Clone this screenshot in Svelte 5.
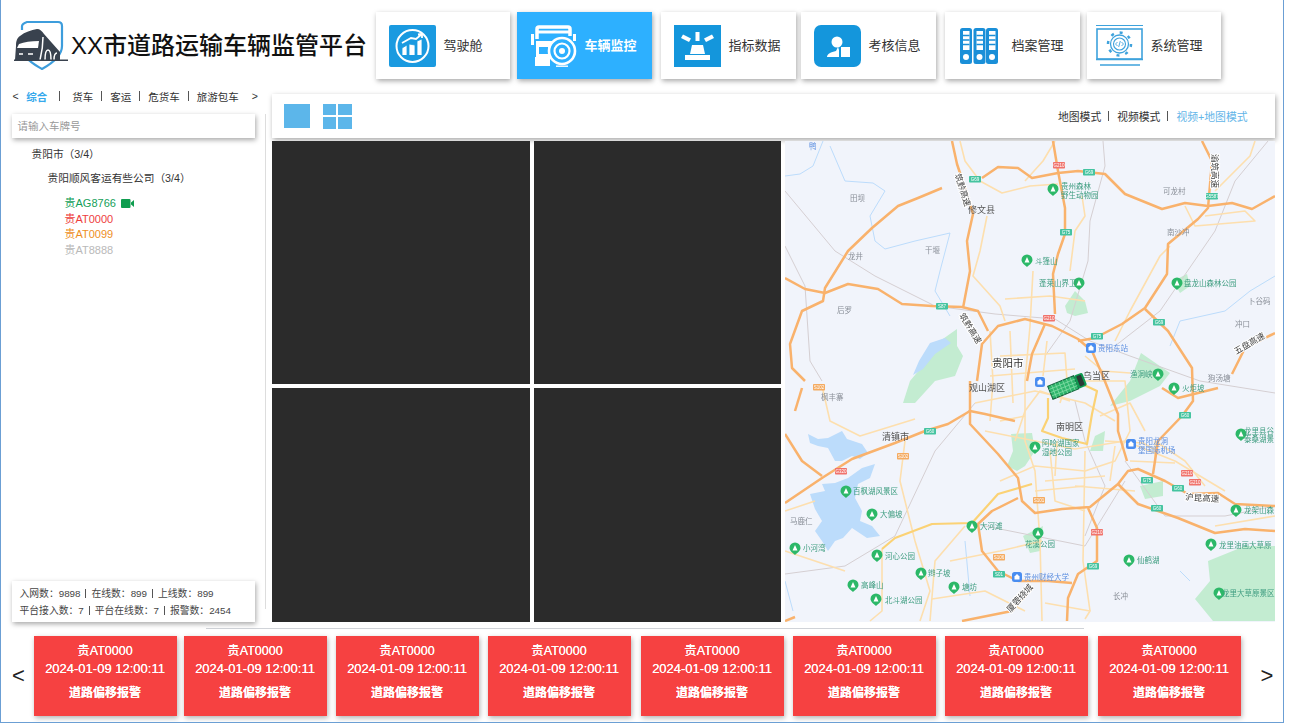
<script>
  const navItems = [
    { key: 'cockpit', label: '驾驶舱' },
    { key: 'monitor', label: '车辆监控', active: true },
    { key: 'metrics', label: '指标数据' },
    { key: 'review', label: '考核信息' },
    { key: 'archive', label: '档案管理' },
    { key: 'system', label: '系统管理' }
  ]
  const tabs = ['货车', '客运', '危货车', '旅游包车']
  const plates = [
    { no: '贵AG8766', cls: 'green', cam: true },
    { no: '贵AT0000', cls: 'red' },
    { no: '贵AT0099', cls: 'orange' },
    { no: '贵AT8888', cls: 'grey' }
  ]
  const alarms = Array(8).fill({ no: '贵AT0000', time: '2024-01-09 12:00:11', type: '道路偏移报警' })

  const highways = [
    '167,0 172,23 182,53 188,73 182,100 185,130 178,167',
    '157,47 133,57 113,65 87,87 63,110 40,147 38,160 17,170 5,203 7,227 20,240',
    '0,137 20,148 40,152 63,143 93,148 117,163 147,165 177,166 193,170 203,190',
    '192,240 197,203 213,185 240,178 267,185 293,198 307,210 317,233 333,273 333,290 342,320',
    '197,37 213,26 233,27 247,37 273,32 293,30 320,33 340,53 377,68 400,62 423,65 447,62 467,68 490,55',
    '417,0 427,20 423,67 413,78 383,103 382,133 360,167 337,183 310,197 293,200',
    '360,168 383,190 407,227 408,260 397,275 373,300 368,333',
    '268,0 273,30 280,67 280,93 273,113 268,133 270,173',
    '490,192 460,207 447,233',
    '260,183 247,213 242,240',
    '0,293 17,320 37,335',
    '0,362 37,337 67,318 110,302 140,290 163,283 185,270 200,273 230,280',
    '185,240 185,283 213,313 233,337 237,360 250,372 277,368 305,366 333,343 343,330 353,328 380,340 403,353 433,352 450,363 490,365',
    '333,343 353,363 393,377 430,392 460,388 490,390',
    '303,367 312,387 312,420 293,433 283,457 282,480',
    '233,357 207,370 193,383 197,410 213,430 233,440 263,440 287,442',
    '177,480 227,470 247,447',
    '17,247 10,270',
    '377,247 393,257 433,247',
    '0,480 10,476'
  ]
  const yellowRoads = [
    '97,408 110,397 147,383 187,382 213,353 247,343',
    '263,257 263,277 257,290 277,297 302,303 307,273 312,250 297,243'
  ]
  const minorRoads = [
    '175,0 180,20 195,40 217,52 245,45 273,43',
    '270,0 258,20 240,40',
    '202,75 195,110 188,135 215,165 220,180',
    '220,158 265,155 300,160',
    '248,130 245,185 240,240 240,300 250,330 255,400 257,480',
    '297,55 300,75 290,90 285,130',
    '330,200 345,170 375,115 385,105',
    '400,65 410,85 470,80 460,70 420,75',
    '430,50 465,15 470,0',
    '300,240 340,240 345,290 330,320 300,330 250,325 215,340',
    '205,190 208,240 205,280',
    '205,235 290,228',
    '190,262 250,250 300,262 330,280',
    '200,290 290,308 340,300 390,320 440,350',
    '265,310 270,360 300,370',
    '300,310 298,420 305,470',
    '260,340 320,335',
    '290,345 350,350',
    '37,245 45,280 75,295 130,278',
    '120,300 115,340 130,400 145,450 135,480',
    '97,408 97,470 85,480',
    '180,385 150,420 145,480',
    '165,420 215,410 257,400',
    '147,458 200,450 240,470',
    '0,370 30,360',
    '0,410 30,420 60,430',
    '370,320 370,300 400,320 420,345',
    '430,385 490,375',
    '260,462 305,470 300,478',
    '230,300 240,270 255,250 285,260',
    '215,215 280,212 282,240 275,262',
    '225,190 228,262',
    '262,200 258,235',
    '300,215 318,230 345,232',
    '315,275 345,262 360,290',
    '320,300 358,302 372,310',
    '325,340 330,305',
    '345,320 390,322',
    '270,335 272,300',
    '250,350 300,345',
    '215,280 240,275'
  ]
  const rails = [
    '0,50 50,110 90,135 150,165 210,173 270,178 305,200 345,215 415,240 490,252',
    '318,0 320,25 305,80 303,120 285,180 260,215',
    '483,0 450,40 430,90 375,170 330,205',
    '0,105 20,145 25,220 37,240',
    '0,433 60,425 110,395 150,310 190,262',
    '185,382 250,395 300,405 340,340',
    '340,320 380,375 440,375 490,365',
    '300,395 320,345 300,300 290,260'
  ]
  const greens = [
    '280,165 290,150 300,160 303,172 290,175 282,172',
    '125,240 140,222 155,200 172,188 172,205 178,215 170,235 150,240 130,262 118,262',
    '388,140 402,133 405,145 395,152',
    '345,240 356,212 385,232 375,245 345,260 325,265',
    '226,293 247,292 250,310 240,325 232,330 222,325 228,310',
    '310,295 320,290 318,310 305,310',
    '423,420 460,405 490,405 490,480 428,480 410,458 425,440',
    '355,345 378,340 378,355 360,358',
    '238,395 258,385 255,410 245,412'
  ]
  const lakes = [
    '23,293 33,298 43,297 57,290 62,298 77,303 83,312 75,318 67,315 57,320 50,320 43,307 33,305 25,302',
    '90,323 85,337 73,343 70,357 77,370 75,380 87,385 95,395 82,397 67,387 58,397 50,400 43,410 37,400 30,390 37,380 30,368 25,353 40,350 37,343 50,342 63,337 77,327',
    '145,202 160,197 166,202 150,213 138,228 128,234 134,220'
  ]
  const rivers = [
    '0,35 15,33 28,25 38,0',
    '45,5 60,40 88,42 100,50 85,75 90,100 100,108 130,100 165,92 155,130 150,150 165,175',
    '385,205 395,180 440,170 465,150 490,135',
    '395,430 405,440',
    '180,400 185,455',
    '0,440 8,470'
  ]
  const shields = [
    [190,38,'g','G69'],[274,24,'r','G210'],[304,31,'g','G69'],[427,55,'g','G5587'],[281,91,'g','G75'],[157,165,'g','S87'],[264,177,'r','G210'],[312,195,'g','G75'],[374,181,'g','G69'],
    [34,246,'o','S102'],[145,290,'g','G60'],[118,315,'o','S102'],[56,330,'r','G320'],[254,359,'o','S101'],[362,339,'g','G75'],[393,347,'g','G60'],[402,332,'r','G210'],[410,341,'r','G210'],
    [372,367,'g','G60'],[312,391,'r','G210'],[308,425,'g','G69'],[214,416,'o','S106'],[214,433,'g','S01'],[400,274,'g','G60']
  ]
  const pins = [
    [268,48],[242,119],[294,142],[392,142],[373,233],[61,350],[87,373],[187,385],[10,407],[92,414],[136,432],[68,444],[91,458],[169,446],
    [253,392],[250,306],[344,419],[456,293],[389,247],[451,369],[426,403],[434,452]
  ]
  const bluePins = [[306,207],[255,241],[232,436],[346,303]]
  const poiText = [
    [276,48,'贵州森林'],[276,57,'野生动物园'],[250,123,'斗篷山'],[254,145,'蓬莱山界卫'],[399,145,'盘龙山森林公园'],[345,236,'渔洞峡'],
    [397,250,'火炬坡'],[68,353,'百枫湖风景区'],[95,376,'大偏坡'],[195,388,'大河滩'],[18,410,'小河湾'],[100,418,'河心公园'],
    [143,435,'辫子坡'],[76,447,'高峰山'],[100,462,'北斗湖公园'],[177,449,'塘坊'],[240,406,'花溪公园'],[257,305,'阿哈湖国家'],[257,314,'湿地公园'],
    [352,422,'仙鹤湖'],[459,293,'龙里县谷'],[459,301,'泰桑湖景'],[459,372,'龙架山森'],[434,407,'龙里油画大草原'],[437,455,'龙里大草原景区']
  ]
  const blueText = [[313,210,'贵阳东站'],[239,439,'贵州财经大学'],[353,303,'贵阳龙洞'],[353,312,'堡国际机场'],[24,8,'鸭']]
  const greyText = [
    [65,60,'田坝'],[63,118,'龙井'],[140,112,'干堰'],[52,172,'后罗'],[378,53,'可龙村'],[382,94,'南沙冲'],[463,163,'卜谷码'],[450,186,'冲口'],
    [423,240,'狗汤塘'],[328,458,'长冲'],[5,383,'马鹿仁'],[36,259,'枫丰寨']
  ]
  const districts = [[183,72,'修文县'],[298,238,'乌当区'],[184,250,'观山湖区'],[271,289,'南明区'],[97,299,'清镇市']]
  const roadNames = [
    [175,50,72,'筑黔高速'],[427,30,90,'渝筑高速'],[183,189,58,'筑黔高速'],[466,205,-30,'五盘高速'],[417,360,4,'沪昆高速'],[237,459,-48,'厦蓉绕城']
  ]
</script>

<div class="page">
  <header class="top">
    <div class="brand">
      <svg class="logo" width="56" height="50" viewBox="0 0 56 50" fill="none">
        <path d="M9 10 V6 Q9.500 3.500 14 2 H45 Q49 2 49 6 V26 C49 36 38 44 29 49 C24 46 18 43 14 38" stroke="#3d9ddc" stroke-width="2.200"/>
        <path d="M2 40 L3 26 C3 21 4 18 7 16 C12 12 18 10 24 9 C27 9 29 11 31 14 L47 32 V40Z" fill="#39424e"/>
        <path d="M6 24 C11 22 18 21 26 21 L25 28 H4 Z" fill="#fff"/>
        <path d="M30 17 C30 26 29 32 27 40 M32 40 C32 33 33 30 35 30 C37 30 38 33 38 40 M41 40 C41 35 42 33 44 33" stroke="#fff" stroke-width="1.500"/>
        <path d="M6 34 h4 M15 34 h5" stroke="#fff" stroke-width="1.500"/>
        <rect x="1" y="39.500" width="54" height="1.500" fill="#39424e"/>
      </svg>
      <h1>XX市道路运输车辆监管平台</h1>
    </div>
    <nav class="nav">
      {#each navItems as item}
        <div class="nav-card" class:active={item.active}>
          <span class="nav-icon">
            {#if item.key === 'cockpit'}
              <svg width="47" height="42" viewBox="0 0 47 42">
                <rect width="47" height="42" rx="2" fill="#1a9ae0"/>
                <circle cx="23.500" cy="21" r="16" fill="none" stroke="#fff" stroke-width="2"/>
                <path d="M13 30 V23 L18 20 V30 M20 30 V19 L26 20 V30 M28 30 V16 L33 14 V30" fill="#fff" stroke="#1a9ae0" stroke-width=".8"/>
                <path d="M13 18 L22 13 L27 14 L33 9 M33 9 l-4 .5 M33 9 v4" fill="none" stroke="#fff" stroke-width="1.800"/>
              </svg>
            {:else if item.key === 'monitor'}
              <svg width="47" height="42" viewBox="0 0 47 42">
                <path d="M6 14 V4 Q6 2 8 2 H37 Q39 2 39 4 V11" fill="none" stroke="#fff" stroke-width="3.500"/>
                <path d="M7 7 H38" stroke="#fff" stroke-width="3"/>
                <rect x="0" y="9" width="3" height="11" fill="#fff"/>
                <rect x="42" y="9" width="3" height="7" fill="#fff"/>
                <path d="M5 16 H25 L19 32 V41 H4 V32 H5Z" fill="#fff"/>
                <rect x="8" y="22" width="9" height="7" fill="#2db0ff"/>
                <circle cx="31" cy="26" r="13" fill="#2db0ff" stroke="#fff" stroke-width="2.600"/>
                <circle cx="31" cy="26" r="7.500" fill="none" stroke="#fff" stroke-width="2.200"/>
                <circle cx="31" cy="26" r="3" fill="#fff"/>
                <rect x="25" y="40.500" width="12" height="1.400" fill="#fff"/>
              </svg>
            {:else if item.key === 'metrics'}
              <svg width="47" height="42" viewBox="0 0 47 42">
                <rect width="47" height="42" fill="#1496dc"/>
                <path d="M21.500 7 h4 v9 h-4Z M7 13 l2-3.500 8 4 -2 3.500Z M40 13 l-2-3.500 -8 4 2 3.500Z" fill="#fff"/>
                <path d="M18 20 h11 l2 9 h-15Z" fill="#fff"/>
                <rect x="11" y="30" width="25" height="5" fill="#fff"/>
              </svg>
            {:else if item.key === 'review'}
              <svg width="47" height="42" viewBox="0 0 47 42">
                <rect width="47" height="42" rx="7" fill="#1496dc"/>
                <circle cx="23" cy="17" r="5.500" fill="#fff"/>
                <path d="M24 22 L22 26 C17 27 13 29 13 32 H25 V25Z" fill="#fff"/>
                <rect x="27" y="22" width="9" height="10" fill="#fff"/>
              </svg>
            {:else if item.key === 'archive'}
              <svg width="39" height="36" viewBox="0 0 39 36">
                {#each [0, 13.500, 26] as x}
                  <g transform="translate({x} 0)">
                    <rect width="12" height="36" rx="2.500" fill="#1a8fd8"/>
                    <rect x="3" y="3" width="6.500" height="19" fill="#fff"/>
                    <path d="M3 7.500 h6.500 M3 12 h6.500 M3 16.500 h6.500" stroke="#1a8fd8" stroke-width="1.400"/>
                    <circle cx="6" cy="29" r="3" fill="#fff"/>
                  </g>
                {/each}
              </svg>
            {:else}
              <svg width="47" height="42" viewBox="0 0 47 42" fill="none" stroke="#3ea2dc">
                <path d="M0 .5 H47" stroke-width="1.200"/>
                <rect x="1" y="4" width="45" height="30" stroke-width="1.600"/>
                <path d="M0 34.500 H47 M4 40 H44" stroke-width="1.600"/>
                <circle cx="23.500" cy="19" r="9" stroke-width="1.300"/>
                <circle cx="23.500" cy="19" r="6" stroke-width="1.100"/>
                <circle cx="23.500" cy="19" r="11.500" stroke-width="2.500" stroke-dasharray="3 6"/>
                <path d="M21.500 17 l-2 2 2 2 M25.500 17 l2 2 -2 2 M24.300 16 l-1.600 6" stroke-width=".9"/>
              </svg>
            {/if}
          </span>
          <span class="nav-label">{item.label}</span>
        </div>
      {/each}
    </nav>
  </header>

  <main class="body">
    <aside class="side">
      <div class="tabs">
        <span class="arrow">&lt;</span>
        <span class="tab-current">综合</span>
        <i class="sep first"></i>
        {#each tabs as tab, i}
          <span>{tab}</span>
          {#if i < tabs.length - 1}<i class="sep"></i>{/if}
        {/each}
        <span class="arrow last">&gt;</span>
      </div>
      <div class="search">请输入车牌号</div>
      <ul class="tree">
        <li class="city">贵阳市（3/4）</li>
        <li class="company">贵阳顺风客运有些公司（3/4）</li>
        {#each plates as p}
          <li class="plate {p.cls}">
            {p.no}
            {#if p.cam}
              <svg width="13" height="9" viewBox="0 0 13 9"><rect width="9.500" height="9" rx="1" fill="#0f9d4f"/><path d="M10 3.500 L13 1 V8 L10 5.500Z" fill="#0f9d4f"/></svg>
            {/if}
          </li>
        {/each}
      </ul>
      <div class="stats">
        <div>入网数：9898<i></i>在线数：899<i></i>上线数：899</div>
        <div>平台接入数：7<i></i>平台在线数：7<i></i>报警数：2454</div>
      </div>
    </aside>
    <div class="divider"></div>
    <section class="content">
      <div class="toolbar">
        <span class="one"></span>
        <span class="four"><b></b><b></b><b></b><b></b></span>
        <div class="modes">
          <span>地图模式</span><i></i><span>视频模式</span><i></i><span class="current">视频+地图模式</span>
        </div>
      </div>
      <div class="wall">
        <div class="cell"></div>
        <div class="cell"></div>
        <div class="map">
          <svg width="490" height="481" viewBox="0 0 490 481">
            <rect width="490" height="481" fill="#f1f4fb"/>
            {#each greens as g}<polygon points={g} fill="#c3ecd1"/>{/each}
            {#each lakes as l}<polygon points={l} fill="#bcdcfb"/>{/each}
            {#each rivers as r}<polyline points={r} fill="none" stroke="#bcdcfb" stroke-width="1"/>{/each}
            {#each rails as r}<polyline points={r} fill="none" stroke="#d5cfd2" stroke-width="1"/>{/each}
            {#each minorRoads as r}<polyline points={r} fill="none" stroke="#fddfae" stroke-width="1.600" stroke-linejoin="round"/>{/each}
            {#each yellowRoads as r}<polyline points={r} fill="none" stroke="#fbd275" stroke-width="2.200" stroke-linejoin="round"/>{/each}
            {#each highways as r}<polyline points={r} fill="none" stroke="#f9b26c" stroke-width="2.500" stroke-linejoin="round"/>{/each}
            {#each shields as [x, y, kind, code]}
              <rect x={x - 6} y={y - 3} width="12" height="6.500" rx=".8" class="shield {kind}"/>
              <text {x} y={y + 2} text-anchor="middle" class="shield-code">{code}</text>
            {/each}
            {#each pins as [x, y]}
              <path d="M{x} {y + 7} C{x - 2} {y + 5} {x - 5.500} {y + 3} {x - 5.500} {y} A5.500 5.500 0 1 1 {x + 5.500} {y} C{x + 5.500} {y + 3} {x + 2} {y + 5} {x} {y + 7}Z" fill="#2cb868"/>
              <path d="M{x - 2.500} {y + 2.500} L{x} {y - 3} L{x + 2.500} {y + 2.500}Z" fill="#fff"/>
            {/each}
            {#each bluePins as [x, y]}
              <rect x={x - 5} y={y - 5} width="10" height="10" rx="2.500" fill="#4a8df0"/>
              <path d="M{x - 2.500} {y + 2.500} V{y - .5} L{x} {y - 3} L{x + 2.500} {y - .5} V{y + 2.500}Z" fill="#fff"/>
            {/each}
            {#each poiText as [x, y, t]}<text {x} {y} class="poi">{t}</text>{/each}
            {#each blueText as [x, y, t]}<text {x} {y} class="poi blue">{t}</text>{/each}
            {#each greyText as [x, y, t]}<text {x} {y} class="poi grey">{t}</text>{/each}
            {#each districts as [x, y, t]}<text {x} {y} class="district">{t}</text>{/each}
            <text x="207" y="226" class="city-name">贵阳市</text>
            {#each roadNames as [x, y, a, t]}
              <text {x} {y} transform="rotate({a} {x} {y})" text-anchor="middle" class="road-name">{t}</text>
            {/each}
            <g transform="translate(282 245) rotate(-22)">
              <rect x="-18" y="-7" width="28" height="14" fill="#2fb56c" stroke="#14633c" stroke-width="1"/>
              <path d="M-14 -7 V7 M-10 -7 V7 M-6 -7 V7 M-2 -7 V7 M2 -7 V7 M6 -7 V7 M-18 -3.500 H10 M-18 0 H10 M-18 3.500 H10" stroke="#86dfa9" stroke-width=".7"/>
              <rect x="10" y="-7" width="9" height="14" rx="2" fill="#0e9a50"/>
              <rect x="12" y="-5.500" width="5" height="11" rx="1" fill="#2c3a35"/>
            </g>
          </svg>
        </div>
        <div class="cell low"></div>
        <div class="cell low"></div>
      </div>
    </section>
  </main>

  <div class="rule"></div>
  <footer class="alarms">
    <span class="chev">&lt;</span>
    <div class="alarm-list">
      {#each alarms as a}
        <div class="alarm">
          <div class="alarm-no">{a.no}</div>
          <div class="alarm-time">{a.time}</div>
          <div class="alarm-type">{a.type}</div>
        </div>
      {/each}
    </div>
    <span class="chev right">&gt;</span>
  </footer>
</div>

<style>
  :global(body) {
    margin: 0;
    background: #fff;
  }

  .page {
    width: 1284px;
    height: 723px;
    box-sizing: border-box;
    border-left: 1.500px solid #6b9fd4;
    border-right: 1.500px solid #6b9fd4;
    border-bottom: 1.500px solid #6b9fd4;
    font-family: "Liberation Sans", "Noto Sans CJK SC", sans-serif;
    color: #333;
    overflow: hidden;
  }

  .top {
    display: flex;
    height: 92px;
    padding-top: 12px;
    box-sizing: border-box;
  }

  .brand {
    width: 374.500px;
    display: flex;
    align-items: center;
    height: 67px;
    padding-left: 12px;
    box-sizing: border-box;
  }

  .logo {
    flex-shrink: 0;
    margin-top: -1px;
  }

  h1 {
    margin: 0 0 0 2px;
    font-size: 24px;
    line-height: 1;
    font-weight: 500;
    color: #111;
    white-space: nowrap;
  }

  .nav {
    display: flex;
    align-items: flex-start;
  }

  .nav-card {
    width: 134px;
    height: 67px;
    display: flex;
    align-items: center;
    background: #fff;
    box-shadow: 1px 2px 5px rgba(0, 0, 0, 0.35);
    box-sizing: border-box;
    padding-left: 13px;
    margin-right: 7px;
    flex-shrink: 0;
  }

  .nav-card:nth-child(2) { margin-right: 9px; width: 135px; }
  .nav-card:nth-child(3) { margin-right: 5px; width: 135px; }
  .nav-card:nth-child(4) { margin-right: 9px; width: 135px; }
  .nav-card:nth-child(5) { width: 135px; }

  .nav-card:nth-child(5) .nav-icon { padding-left: 2px; }

  .nav-card:nth-child(6) { padding-left: 9px; }

  .nav-card.active {
    background: #2db0ff;
  }

  .nav-icon {
    display: flex;
    align-items: center;
    width: 47px;
    height: 42px;
    flex-shrink: 0;
  }

  .nav-label {
    margin-left: 8px;
    padding-bottom: 2px;
    font-size: 13px;
    color: #333;
    white-space: nowrap;
  }

  .nav-card:nth-child(5) .nav-label { margin-left: 5px; }

  .active .nav-label {
    color: #fff;
    font-weight: 700;
    margin-left: 14px;
  }

  .active .nav-icon { margin-left: 1px; margin-right: -7px; }

  .body {
    display: flex;
    height: 530px;
  }

  .side {
    width: 243px;
    margin-left: 10.500px;
    display: flex;
    flex-direction: column;
    flex-shrink: 0;
  }

  .tabs {
    display: flex;
    align-items: center;
    height: 22px;
    margin-top: -7px;
    font-size: 10.500px;
    color: #333;
    white-space: nowrap;
    gap: 8px;
  }

  .tabs > * { flex-shrink: 0; }

  .tabs .arrow {
    margin-left: 1px;
    margin-right: -0.500px;
  }

  .tabs .arrow.last {
    margin-left: 5px;
    margin-right: 0;
  }

  .tab-current {
    color: #36a9ec;
    font-weight: 700;
  }

  .sep {
    display: inline-block;
    width: 1px;
    height: 10px;
    background: #555;
  }

  .sep.first {
    margin: 0 4.500px 0 3.500px;
  }

  .search {
    height: 24px;
    line-height: 24px;
    padding-left: 6px;
    font-size: 10.500px;
    color: #999;
    box-shadow: 1px 2px 5px rgba(0, 0, 0, 0.35);
    margin-top: 7px;
    background: #fff;
  }

  .tree {
    list-style: none;
    margin: 0;
    padding: 0;
    flex: 1;
    font-size: 10.700px;
    text-spacing-trim: space-all;
  }

  .tree li { white-space: nowrap; }

  .city {
    padding-left: 20px;
    margin-top: 8px;
    line-height: 16px;
  }

  .company {
    padding-left: 36px;
    margin-top: 8px;
    line-height: 16px;
  }

  .plate {
    padding-left: 53px;
    font-size: 11px;
    line-height: 15.500px;
    display: flex;
    align-items: center;
    gap: 5px;
  }

  .company + .plate { margin-top: 10px; }

  .green { color: #14a05a; }
  .red { color: #ee3d3d; }
  .orange { color: #ee8f1f; }
  .grey { color: #b9b9b9; }

  .stats {
    height: 41px;
    box-sizing: border-box;
    padding: 4px 0 0 8px;
    font-size: 9.800px;
    line-height: 17px;
    color: #444;
    background: #fff;
    box-shadow: 1px 2px 5px rgba(0, 0, 0, 0.35);
    white-space: nowrap;
  }

  .stats i {
    display: inline-block;
    width: 1px;
    height: 9px;
    background: #555;
    margin: 0 5px;
    vertical-align: -1px;
  }

  .divider {
    width: 1px;
    height: 495px;
    margin: 22px 0 0 10px;
    background: #ddd;
    flex-shrink: 0;
  }

  .content {
    margin-left: 6px;
    flex-shrink: 0;
  }

  .toolbar {
    width: 1003px;
    height: 44px;
    margin-top: 2px;
    display: flex;
    align-items: center;
    padding-left: 12px;
    box-sizing: border-box;
    background: #fff;
    box-shadow: 1px 2px 5px rgba(0, 0, 0, 0.35);
  }

  .one {
    width: 26px;
    height: 24px;
    background: #5cb6ea;
  }

  .four {
    width: 29px;
    height: 25px;
    margin-left: 13px;
    display: grid;
    grid-template-columns: 1fr 1fr;
    grid-template-rows: 1fr 1fr;
    gap: 1.500px;
  }

  .four b { background: #5cb6ea; }

  .modes {
    margin-left: auto;
    margin-right: 27px;
    display: flex;
    align-items: center;
    font-size: 10.800px;
    color: #333;
    white-space: nowrap;
  }

  .modes i {
    width: 1px;
    height: 10px;
    margin: 0 8px 0 7px;
    background: #555;
  }

  .modes .current { color: #63b5e8; }

  .wall {
    display: grid;
    grid-template-columns: 258px 247px 490px;
    grid-template-rows: 243px 234px;
    gap: 4px;
    margin-top: 3px;
  }

  .cell { background: #2b2b2b; }

  .map {
    grid-column: 3;
    grid-row: 1 / span 2;
    overflow: hidden;
    height: 481px;
  }

  .map svg {
    display: block;
    filter: blur(0.35px);
  }

  .cell:nth-child(4) { grid-column: 1; grid-row: 2; }
  .cell:nth-child(5) { grid-column: 2; grid-row: 2; }

  .shield.g { fill: #45c4a0; }
  .shield.r { fill: #f0736c; }
  .shield.o { fill: #f4ab62; }

  .shield-code {
    font-size: 4.500px;
    fill: #fff;
  }

  .poi {
    font-size: 7.500px;
    fill: #3f9d80;
  }

  .poi.blue { fill: #5d8fe0; }
  .poi.grey { fill: #8a8f98; }

  .district {
    font-size: 9px;
    fill: #555;
  }

  .city-name {
    font-size: 10.500px;
    fill: #333;
    paint-order: stroke;
    stroke: #fff;
    stroke-width: 2px;
  }

  .road-name {
    font-size: 8.500px;
    fill: #444;
    paint-order: stroke;
    stroke: #fff;
    stroke-width: 2px;
  }

  .rule {
    width: 878px;
    height: 1px;
    margin: 6px 0 0 205px;
    background: #d0d3d8;
  }

  .alarms {
    display: flex;
    align-items: flex-start;
    margin-top: 7px;
  }

  .chev {
    width: 32.500px;
    padding-left: 11px;
    box-sizing: border-box;
    font-size: 22px;
    line-height: 80px;
    color: #222;
    flex-shrink: 0;
  }

  .chev.right {
    padding-left: 20px;
    width: 40px;
  }

  .alarm-list {
    display: flex;
    gap: 9px;
    width: 1207px;
    flex-shrink: 0;
  }

  .alarm {
    width: 143px;
    height: 80px;
    flex-shrink: 0;
    background: #f64141;
    color: #fff;
    text-align: center;
    box-shadow: 1px 2px 5px rgba(0, 0, 0, 0.3);
    text-shadow: 0 0 0.6px #fff;
    white-space: nowrap;
  }

  .alarm:nth-child(2) { margin-left: -2px; }
  .alarm:nth-child(5),
  .alarm:nth-child(8) { margin-left: 1px; }

  .alarm-no {
    font-size: 12.500px;
    line-height: 17px;
    padding-top: 7px;
  }

  .alarm-time {
    font-size: 13px;
    line-height: 17px;
  }

  .alarm-type {
    font-size: 12px;
    font-weight: 700;
    line-height: 17px;
    margin-top: 8px;
  }
</style>
